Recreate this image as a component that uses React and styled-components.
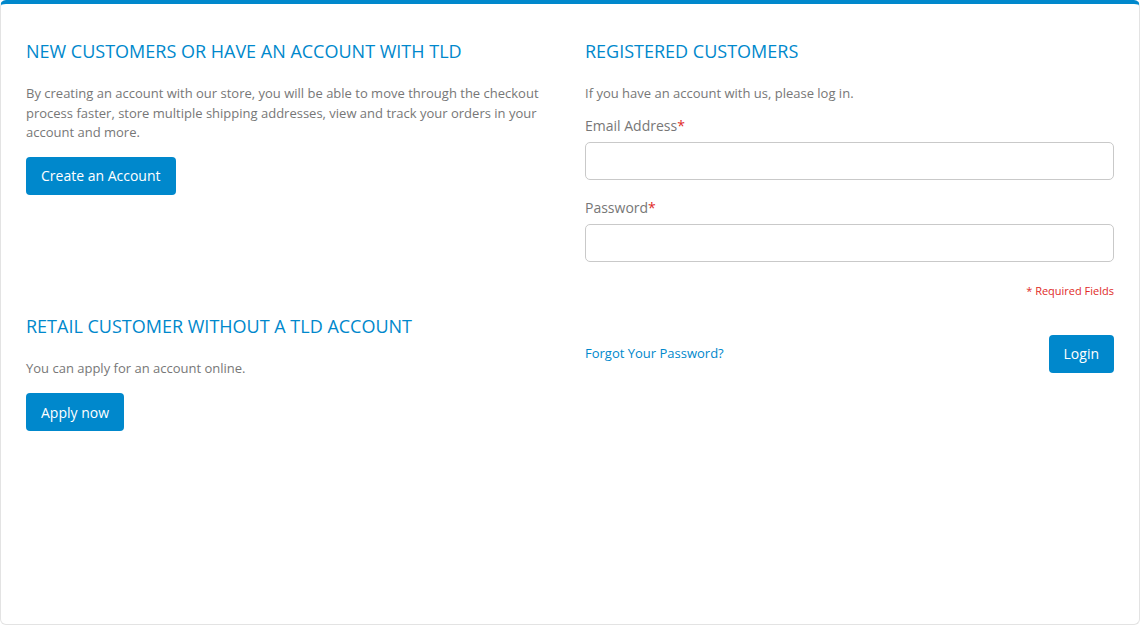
import styled, { createGlobalStyle } from "styled-components"
import React from "react"

const GlobalStyle = createGlobalStyle`
html, body {
    margin: 0;
    padding: 0;
    background: #fff;
}
* {
    box-sizing: border-box;
}
body {
    font-family: "Open Sans", "Liberation Sans", sans-serif;
    color: #777;
}
`

export default function App() {
    const [email, setEmail] = React.useState('')
    const [senha, setSenha] = React.useState('')

    return (
        <Card>
            <GlobalStyle />
            <Coluna>
                <Bloco>
                    <Titulo>New Customers or have an account with TLD</Titulo>
                    <Texto>By creating an account with our store, you will be able to move through the checkout process faster, store multiple shipping addresses, view and track your orders in your account and more.</Texto>
                    <Botao>Create an Account</Botao>
                </Bloco>
                <Bloco segundo>
                    <Titulo>Retail customer without a TLD account</Titulo>
                    <Texto>You can apply for an account online.</Texto>
                    <Botao>Apply now</Botao>
                </Bloco>
            </Coluna>
            <Coluna>
                <Titulo>Registered Customers</Titulo>
                <Texto>If you have an account with us, please log in.</Texto>
                <Campo>
                    <Rotulo>Email Address<span>*</span></Rotulo>
                    <Entrada type="email" value={email} onChange={e => setEmail(e.target.value)} />
                </Campo>
                <Campo>
                    <Rotulo>Password<span>*</span></Rotulo>
                    <Entrada type="password" value={senha} onChange={e => setSenha(e.target.value)} />
                </Campo>
                <Obrigatorio>* Required Fields</Obrigatorio>
                <Acoes>
                    <Link href="#">Forgot Your Password?</Link>
                    <Botao>Login</Botao>
                </Acoes>
            </Coluna>
        </Card>
    )
}

const Card = styled.div`
height: 100vh;
border: 1px solid #e3e3e3;
border-top: 4px solid #0088cc;
border-radius: 6px;
padding: 36px 25px 25px;
display: grid;
grid-template-columns: 1fr 1fr;
column-gap: 30px;
align-items: start;
`

const Coluna = styled.div`
display: flex;
flex-direction: column;
`

const Bloco = styled.div`
display: flex;
flex-direction: column;
align-items: flex-start;
margin-top: ${props => props.segundo ? '120px' : '0'};

p {
    margin-bottom: ${props => props.segundo ? '15px' : '14px'};
}
`

const Titulo = styled.h2`
margin: 0 0 22px;
font-size: 18px;
line-height: 22px;
font-weight: 400;
text-transform: uppercase;
color: #0088cc;
`

const Texto = styled.p`
margin: 0 0 14px;
font-size: 13px;
line-height: 19.5px;
color: #777;
`

const Botao = styled.button`
height: 38px;
padding: 0 15px;
border: none;
border-radius: 4px;
background-color: #0088cc;
color: #fff;
font-family: "Open Sans", "Liberation Sans", sans-serif;
font-size: 14px;
cursor: pointer;
`

const Campo = styled.div`
display: flex;
flex-direction: column;
gap: 6px;
margin-bottom: 18px;

&:first-of-type {
    margin-top: -2px;
}
`

const Rotulo = styled.label`
font-size: 14px;
line-height: 20px;
color: #777;

span {
    color: #e02b27;
}
`

const Entrada = styled.input`
height: 38px;
width: 100%;
border: 1px solid #c9c9c9;
border-radius: 5px;
padding: 0 10px;
font-size: 14px;
outline: none;
`

const Obrigatorio = styled.div`
margin-top: 3px;
text-align: right;
font-size: 11px;
line-height: 16px;
color: #e02b27;
`

const Acoes = styled.div`
margin-top: 36px;
display: flex;
justify-content: space-between;
align-items: center;
`

const Link = styled.a`
font-size: 13px;
line-height: 18px;
margin-top: -2px;
color: #0088cc;
text-decoration: none;
`
